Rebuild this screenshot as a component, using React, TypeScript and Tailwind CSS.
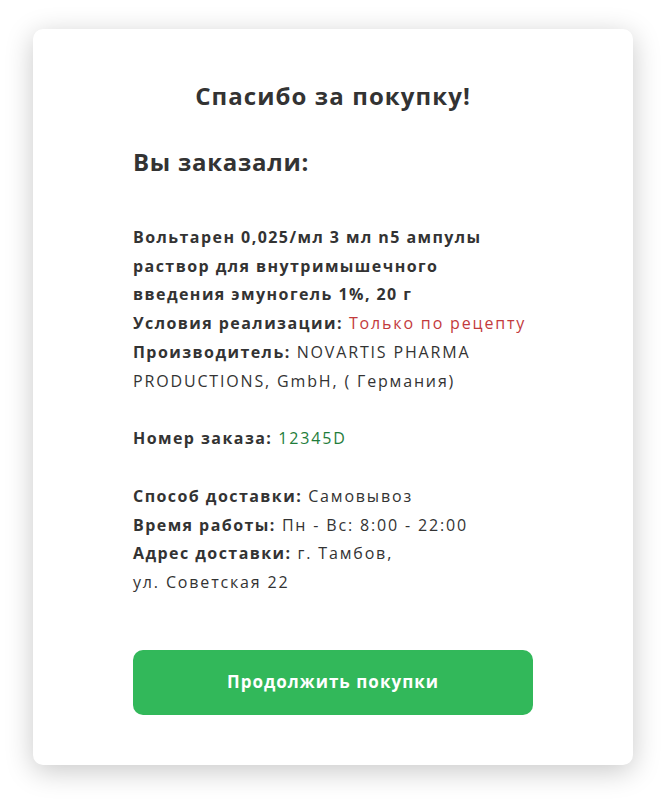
import React from 'react';

const Row = ({ label, children }: { label: string; children: React.ReactNode }) => (
  <div>
    <span className="font-bold tracking-[0.09em]">{label}</span> {children}
  </div>
);

const App = () => {
  return (
    <div className="min-h-screen bg-white px-[33px] pt-[29px] pb-[37px] font-['Open_Sans',sans-serif] text-[#333333]">
      <div className="rounded-[10px] bg-white px-[100px] pt-[49px] pb-[50px] shadow-[0_6px_28px_rgba(0,0,0,0.22)]">
        <h1 className="text-center text-[24px] font-bold leading-[36px] tracking-[0.045em]">Спасибо за покупку!</h1>

        <h2 className="mt-[30px] text-[24px] font-bold leading-[36px] tracking-[0.03em]">Вы заказали:</h2>

        <div className="mt-[43px] text-[16px] leading-[28.7px] tracking-[0.115em]">
          <div className="font-bold tracking-[0.09em]">
            <div>Вольтарен 0,025/мл 3 мл n5 ампулы</div>
            <div>раствор для внутримышечного</div>
            <div>введения эмуногель 1%, 20 г</div>
          </div>
          <Row label="Условия реализации:">
            <span className="text-[#c33a3c]">Только по рецепту</span>
          </Row>
          <Row label="Производитель:">
            NOVARTIS PHARMA
            <br />
            PRODUCTIONS, GmbH, ( Германия)
          </Row>

          <div className="mt-[29px]">
            <Row label="Номер заказа:">
              <span className="text-[#1f7d3b]">12345D</span>
            </Row>
          </div>

          <div className="mt-[29px]">
            <Row label="Способ доставки:">Самовывоз</Row>
            <Row label="Время работы:">Пн - Вс: 8:00 - 22:00</Row>
            <Row label="Адрес доставки:">
              г. Тамбов,
              <br />
              ул. Советская 22
            </Row>
          </div>
        </div>

        <button className="mt-[53px] flex h-[65px] w-full items-center justify-center rounded-[10px] bg-[#32b85a] text-[17px] font-bold tracking-[0.06em] text-white">
          Продолжить покупки
        </button>
      </div>
    </div>
  );
};

export default App;
